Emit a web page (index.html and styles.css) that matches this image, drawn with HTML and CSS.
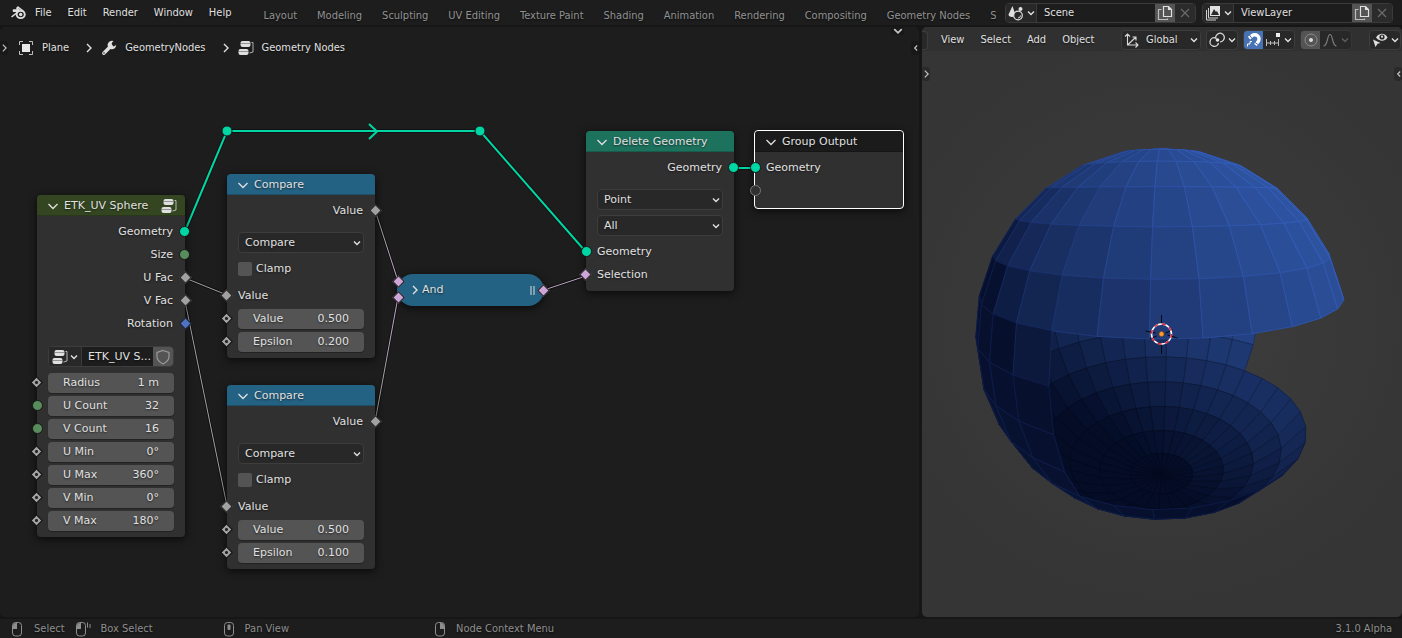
FILE: index.html
```html
<!DOCTYPE html>
<html lang="en">
<head>
<meta charset="utf-8">
<title>Geometry Nodes</title>
<link rel="stylesheet" href="styles.css">
</head>
<body>
<svg class="defs" aria-hidden="true">
  <symbol id="i-down" viewBox="0 0 8 8"><path d="M1 2.500 4 5.500 7 2.500" fill="none" stroke="currentColor" stroke-width="1.4"/></symbol>
  <symbol id="i-fold" viewBox="0 0 12 12"><path d="M1.5 4 6 8.500 10.500 4" fill="none" stroke="currentColor" stroke-width="1.3"/></symbol>
  <symbol id="i-right" viewBox="0 0 8 12"><path d="M2 2 6 6 2 10" fill="none" stroke="currentColor" stroke-width="1.4"/></symbol>
  <symbol id="i-left" viewBox="0 0 8 12"><path d="M6 3 3 6 6 9" fill="none" stroke="currentColor" stroke-width="1.4"/></symbol>
  <symbol id="i-tree" viewBox="0 0 16 16"><rect x="2.500" y="1" width="10" height="6" rx="2" fill="currentColor"/><rect x="0.500" y="9" width="10" height="6" rx="2" fill="currentColor"/><path d="M2.500 3.500H12.500M.5 11.500H10.500" stroke="#333" stroke-width=".8" opacity=".55"/><path d="M13.500 2.500h1.500v9.500l-3.500 1" fill="none" stroke="currentColor" opacity=".75"/></symbol>
  <symbol id="i-copy" viewBox="0 0 16 16"><path d="M6.500 1.500h5l3 3v7h-8zM11.500 1.500v3h3" fill="none" stroke="currentColor" stroke-width="1.200"/><path d="M4.500 4.500h-3v10h9v-1" fill="none" stroke="currentColor" stroke-width="1.200" opacity=".75"/></symbol>
  <symbol id="i-close" viewBox="0 0 16 16"><path d="m4 4 8 8M12 4l-8 8" stroke="#6a6a6a" stroke-width="1.200"/></symbol>
  <symbol id="i-mouse" viewBox="0 0 16 16"><rect x="3.500" y="1.500" width="9" height="13.500" rx="3" fill="none" stroke="currentColor"/></symbol>
</svg>

<div class="app">
  <header class="topbar">
    <nav class="menus">
      <svg class="logo" viewBox="0 0 16 16"><path d="M1 12 8.500 6.200H3V4.900h5.500L6.300 3.200 7.500 2l5.500 4.300" fill="none" stroke="#e0e0e0" stroke-width="1.500" stroke-linejoin="round"/><ellipse cx="10.200" cy="9.500" rx="5" ry="4.500" fill="#e0e0e0"/><ellipse cx="10.200" cy="9.500" rx="3.100" ry="2.800" fill="#1d1d1d"/><circle cx="10.200" cy="9.500" r="1.700" fill="#e0e0e0"/></svg>
      <button>File</button><button>Edit</button><button>Render</button><button>Window</button><button>Help</button>
    </nav>
    <nav class="tabs">
      <button>Layout</button><button>Modeling</button><button>Sculpting</button><button>UV Editing</button><button>Texture Paint</button><button>Shading</button><button>Animation</button><button>Rendering</button><button>Compositing</button><button>Geometry Nodes</button><button>Scripting</button>
    </nav>
    <div class="idbox">
      <button class="idpick" aria-label="Browse scene"><svg class="ic" viewBox="0 0 16 16"><path d="M4.500 1 7 8.500c0 2-1 3.500-3 3.500S.500 11 .500 9.500z" fill="#e0e0e0"/><circle cx="12.500" cy="4" r="2" fill="#e0e0e0"/><circle cx="10" cy="10.500" r="4.300" fill="#282828" stroke="#e0e0e0" stroke-width="1.200"/><path d="M10 13a2.500 2.500 0 0 0 2.500-2.500" fill="none" stroke="#e0e0e0"/></svg><svg class="dn"><use href="#i-down"/></svg></button>
      <input aria-label="Scene" value="Scene">
      <button class="dup" aria-label="New scene"><svg class="ic"><use href="#i-copy"/></svg></button>
      <button class="del" aria-label="Delete scene"><svg class="ic"><use href="#i-close"/></svg></button>
    </div>
    <div class="idbox">
      <button class="idpick" aria-label="Browse view layer"><svg class="ic" viewBox="0 0 16 16"><rect x="5" y="1" width="10" height="10" fill="#e0e0e0"/><path d="m6 10 3-6 2 3 1-1 2 4z" fill="#282828"/><path d="M3.500 3v10h9.500M1.500 5v10h9.500" fill="none" stroke="#cfcfcf"/></svg><svg class="dn"><use href="#i-down"/></svg></button>
      <input aria-label="View layer" value="ViewLayer">
      <button class="dup" aria-label="New view layer"><svg class="ic"><use href="#i-copy"/></svg></button>
      <button class="del" aria-label="Delete view layer"><svg class="ic"><use href="#i-close"/></svg></button>
    </div>
  </header>

  <main class="areas">
    <section class="editor">
      <span class="handle h-left"><svg><use href="#i-right"/></svg></span>
      <span class="handle h-right"><svg><use href="#i-left"/></svg></span>
      <span class="handle h-top"><svg><use href="#i-down"/></svg></span>
      <nav class="crumbs">
        <svg class="ic" viewBox="0 0 16 16"><rect x="4" y="4" width="8" height="8" fill="#e8e8e8"/><path d="M1.500 5V1.500H5M11 1.500h3.500V5M14.500 11v3.500H11M5 14.500H1.500V11" fill="none" stroke="#bdbdbd"/></svg>
        <a href="#">Plane</a>
        <svg class="sep"><use href="#i-right"/></svg>
        <svg class="ic" viewBox="0 0 16 16"><path d="M2.800 13.300 10 6" stroke="#e0e0e0" stroke-width="3.400" stroke-linecap="round"/><path d="M12.500 1A4.300 4.300 0 1 0 15.200 5l-2.500 1.500-2-1.200.2-2.600z" fill="#e0e0e0"/><circle cx="3" cy="13" r=".8" fill="#1d1d1d"/></svg>
        <a href="#">GeometryNodes</a>
        <svg class="sep"><use href="#i-right"/></svg>
        <svg class="ic"><use href="#i-tree"/></svg>
        <a href="#">Geometry Nodes</a>
      </nav>

      <svg class="links" aria-hidden="true">
        <defs>
          <linearGradient id="ga" gradientUnits="userSpaceOnUse" x1="375" y1="210" x2="398" y2="281"><stop offset=".3" stop-color="#a1a1a1"/><stop offset="1" stop-color="#cca6d6"/></linearGradient>
          <linearGradient id="gb" gradientUnits="userSpaceOnUse" x1="375" y1="422" x2="398" y2="297"><stop offset=".3" stop-color="#a1a1a1"/><stop offset="1" stop-color="#cca6d6"/></linearGradient>
        </defs>
        <g transform="translate(0 -27)" fill="none">
          <path class="shade" d="M185 231 227 131H480L586 252M734 168h21"/>
          <path stroke="#00d6a3" stroke-width="2" d="M185 231 227 131H480L586 252M734 168h21M369 124l8 7.500-8 7.500"/>
          <path class="shade thin" d="M185 278 227 295M185 301 227 506M375 210 398 281M375 422 398 297M544 290 586 276"/>
          <path stroke="#a1a1a1" d="M185 278 227 295M185 301 227 506"/>
          <path stroke="url(#ga)" d="M375 210 398 281"/>
          <path stroke="url(#gb)" d="M375 422 398 297"/>
          <path stroke="#b9a0c0" d="M544 290 586 276"/>
          <circle cx="227" cy="131" r="5" fill="#00d6a3" stroke="#1a1a1a"/>
          <circle cx="480" cy="131" r="5" fill="#00d6a3" stroke="#1a1a1a"/>
        </g>
      </svg>

      <article class="node n-sphere">
        <header class="head group"><svg class="fold"><use href="#i-fold"/></svg><span>ETK_UV Sphere</span><svg class="ic end"><use href="#i-tree"/></svg></header>
        <div class="row out">Geometry<i class="sock dot geo"></i></div>
        <div class="row out">Size<i class="sock dot int"></i></div>
        <div class="row out">U Fac<i class="sock dia"></i></div>
        <div class="row out">V Fac<i class="sock dia"></i></div>
        <div class="row out">Rotation<i class="sock dia vec"></i></div>
        <div class="idrow">
          <button class="idpick" aria-label="Browse node group"><svg class="ic"><use href="#i-tree"/></svg><svg class="dn"><use href="#i-down"/></svg></button>
          <input aria-label="Node group" value="ETK_UV S...">
          <button class="dup" aria-label="Fake user"><svg class="ic" viewBox="0 0 16 16"><path d="M8 1.500 14 3.500v4c0 3.500-3 6-6 7.500-3-1.500-6-4-6-7.500v-4z" fill="none" stroke="#9a9a9a" stroke-width="1.200"/></svg></button>
        </div>
        <div class="row"><i class="sock dia hole"></i><label class="field"><span>Radius</span><input value="1 m"></label></div>
        <div class="row"><i class="sock dot int"></i><label class="field"><span>U Count</span><input value="32"></label></div>
        <div class="row"><i class="sock dot int"></i><label class="field"><span>V Count</span><input value="16"></label></div>
        <div class="row"><i class="sock dia hole"></i><label class="field"><span>U Min</span><input value="0°"></label></div>
        <div class="row"><i class="sock dia hole"></i><label class="field"><span>U Max</span><input value="360°"></label></div>
        <div class="row"><i class="sock dia hole"></i><label class="field"><span>V Min</span><input value="0°"></label></div>
        <div class="row"><i class="sock dia hole"></i><label class="field"><span>V Max</span><input value="180°"></label></div>
      </article>

      <article class="node n-cmp1">
        <header class="head math"><svg class="fold"><use href="#i-fold"/></svg><span>Compare</span></header>
        <div class="row out">Value<i class="sock dia"></i></div>
        <div class="picks"><select aria-label="Operation"><option>Compare</option></select></div>
        <div class="row check"><label><input type="checkbox">Clamp</label></div>
        <div class="row">Value<i class="sock dia"></i></div>
        <div class="row"><i class="sock dia hole"></i><label class="field"><span>Value</span><input value="0.500"></label></div>
        <div class="row"><i class="sock dia hole"></i><label class="field"><span>Epsilon</span><input value="0.200"></label></div>
      </article>

      <article class="node n-cmp2">
        <header class="head math"><svg class="fold"><use href="#i-fold"/></svg><span>Compare</span></header>
        <div class="row out">Value<i class="sock dia"></i></div>
        <div class="picks"><select aria-label="Operation"><option>Compare</option></select></div>
        <div class="row check"><label><input type="checkbox">Clamp</label></div>
        <div class="row">Value<i class="sock dia"></i></div>
        <div class="row"><i class="sock dia hole"></i><label class="field"><span>Value</span><input value="0.500"></label></div>
        <div class="row"><i class="sock dia hole"></i><label class="field"><span>Epsilon</span><input value="0.100"></label></div>
      </article>

      <article class="node n-and">
        <svg class="unfold"><use href="#i-right"/></svg><span>And</span><i class="grip"></i>
        <i class="sock dia bool s1"></i><i class="sock dia bool s2"></i><i class="sock dia bool s3"></i>
      </article>

      <article class="node n-del">
        <header class="head geom"><svg class="fold"><use href="#i-fold"/></svg><span>Delete Geometry</span></header>
        <div class="row out">Geometry<i class="sock dot geo"></i></div>
        <div class="picks"><select aria-label="Domain"><option>Point</option></select><select aria-label="Mode"><option>All</option></select></div>
        <div class="row">Geometry<i class="sock dot geo"></i></div>
        <div class="row">Selection<i class="sock dia bool"></i></div>
      </article>

      <article class="node n-out">
        <header class="head io"><svg class="fold"><use href="#i-fold"/></svg><span>Group Output</span></header>
        <div class="row">Geometry<i class="sock dot geo"></i></div>
        <div class="row"><i class="sock dot empty"></i></div>
      </article>
    </section>

    <section class="viewport">
      <header class="vhead">
        <span class="stub"></span>
        <nav class="vmenus"><button>View</button><button>Select</button><button>Add</button><button>Object</button></nav>
        <div class="tool orient">
          <svg class="ic" viewBox="0 0 16 16"><path d="M3.500 2v11H14M1 4.500 3.500 2 6 4.500M11.500 10.500 14 13l-2.500 2.500M3.500 13 12 5M8.500 5H12v3.500" fill="none" stroke="#d8d8d8" stroke-width="1.100"/></svg>
          <select aria-label="Transform orientation"><option>Global</option></select>
        </div>
        <button class="tool two" aria-label="Pivot point"><svg class="ic" viewBox="0 0 16 16"><path d="M6 5.800A4.300 4.300 0 1 0 9.500 11M7 7A4.300 4.300 0 1 1 11 9.800" fill="none" stroke="#d8d8d8" stroke-width="1.300"/><circle cx="8.500" cy="8" r="1.800" fill="#e8e8e8"/></svg><svg class="dn"><use href="#i-down"/></svg></button>
        <div class="tool pair">
          <button class="seg on" aria-label="Snap"><svg class="ic" viewBox="0 0 16 16"><path d="M3 6.200 5.500 4.200A4.200 4.200 0 1 1 12 9.800L9.500 13" fill="none" stroke="#fff" stroke-width="3.400"/><path d="M3.500 3 6 6.500M8.500 10l4 3" stroke="#4772b3" stroke-width="1"/><path d="M1.500 14.500v-2.500h2.500v-2.500h2" fill="none" stroke="#fff"/></svg></button>
          <button class="seg wide" aria-label="Snap to"><svg class="ic" viewBox="0 0 16 16"><rect x="11" y="1" width="4" height="4" fill="#eee"/><path d="M1.500 7v7M5.500 9v4M9.500 9v4M13.500 7v7M1 11h13" stroke="#bdbdbd" fill="none"/></svg><svg class="dn"><use href="#i-down"/></svg></button>
        </div>
        <div class="tool pair dim">
          <button class="seg gray" aria-label="Proportional editing"><svg class="ic" viewBox="0 0 16 16"><circle cx="8" cy="8" r="6" fill="none" stroke="#8c8c8c"/><circle cx="8" cy="8" r="2" fill="#ddd"/></svg></button>
          <button class="seg wide" aria-label="Falloff"><svg class="ic" viewBox="0 0 16 16"><path d="M1.500 14C6 14 5 2.500 8 2.500S10 14 14.500 14" fill="none" stroke="#7d7d7d" stroke-width="1.200"/></svg><svg class="dn faint"><use href="#i-down"/></svg></button>
        </div>
        <button class="tool two vis" aria-label="Visibility"><svg class="ic" viewBox="0 0 16 16"><path d="M4 5.500C7 .5 13 .5 15.500 5.500 13 9.500 8 10 4.500 6z" fill="#e0e0e0"/><circle cx="10" cy="5" r="2.600" fill="#282828"/><circle cx="10" cy="4.700" r="1.100" fill="#e0e0e0"/><path d="M1 7.500 8.500 11l-3 .7L3.500 15z" fill="#e0e0e0"/></svg><svg class="dn"><use href="#i-down"/></svg></button>
      </header>
      <span class="handle v-left"><svg><use href="#i-right"/></svg></span>
      <span class="handle v-right"><svg><use href="#i-left"/></svg></span>
      <svg class="scene" viewBox="-239 -283 479 566">
        <g id="mesh"></g>
        <g fill="none">
          <path stroke="#05070f" d="M0-19V-10M0 10V20M-16-3l10 2M6 1l10 3M-12 5l7-3M4-1l7-3"/>
          <circle r="10" stroke="#fff" stroke-width="1.500"/>
          <circle r="10" stroke="#e0233c" stroke-width="1.500" stroke-dasharray="3.930 3.930"/>
          <circle r="2.500" fill="#ff9a2e" stroke="#7a4310" stroke-width=".6"/>
        </g>
      </svg>
    </section>
  </main>

  <footer class="status">
    <span class="hint"><svg class="ic"><use href="#i-mouse"/><path d="M4 8V4.500Q4 2 7 2h1v6z" fill="currentColor"/></svg>Select</span>
    <span class="hint"><svg class="ic"><use href="#i-mouse" x="-3"/><path d="M1 8V4.500Q1 2 4 2h1v6z" fill="currentColor"/><path d="M11.500 1.500v5M14 3v4" stroke="currentColor"/></svg>Box Select</span>
    <span class="hint pan"><svg class="ic"><use href="#i-mouse"/><rect x="6.500" y="3.500" width="3" height="5.500" rx="1" fill="currentColor"/></svg>Pan View</span>
    <span class="hint ctx"><svg class="ic"><use href="#i-mouse"/><path d="M12 8V4.500Q12 2 9 2H8v6z" fill="currentColor"/></svg>Node Context Menu</span>
    <span class="version">3.1.0 Alpha</span>
  </footer>
</div>
<script src="mesh.js"></script>
</body>
</html>
```

FILE: styles.css
```css
* { box-sizing: border-box; }
body {
  margin: 0;
  background: #161616;
  color: #e0e0e0;
  font: 11px/16px "DejaVu Sans Condensed", "DejaVu Sans", sans-serif;
  text-shadow: 0 1px 2px rgba(0, 0, 0, .6);
}
button, input, select { font: inherit; color: inherit; text-shadow: inherit; margin: 0; padding: 0; border: 0; background: none; }
button { white-space: nowrap; }
a { color: inherit; text-decoration: none; }
svg { display: block; flex: none; }
.defs { position: absolute; width: 0; height: 0; }
.ic { width: 16px; height: 16px; }
.dn { width: 8px; height: 8px; }

.app { display: flex; flex-direction: column; height: 100vh; }

.topbar { display: flex; align-items: center; height: 25px; padding-right: 9px; background: #1d1d1d; }
.menus { display: flex; align-items: center; gap: 16px; padding: 1px 0 0 10px; }
.logo { width: 17px; height: 16px; margin-right: -8px; }
.tabs { display: flex; flex: 1; min-width: 0; gap: 20px; margin: 7px 9px 0 32px; overflow: hidden; color: #929292; }
.idbox { display: flex; height: 20px; border: 1px solid #3a3a3a; border-radius: 4px; overflow: hidden; background: #1d1d1d; flex: 0 0 191px; margin-left: 6px; }
.tabs + .idbox { margin-left: 0; }
.idpick { display: flex; align-items: center; justify-content: center; gap: 3px; width: 31px; background: #282828; border-right: 1px solid #3a3a3a; }
.idbox input { flex: 1; min-width: 0; padding-left: 7px; }
.dup { display: flex; align-items: center; justify-content: center; width: 20px; background: #545454; }
.del { display: flex; align-items: center; justify-content: center; width: 20px; background: #2b2b2b; }

.areas { display: flex; flex: 1; min-height: 0; gap: 3px; padding-top: 2px; }
.editor { position: relative; flex: 919 1 0; min-width: 0; background: #1d1d1d; border-radius: 5px; overflow: hidden; }
.viewport { position: relative; flex: 480 1 0; min-width: 0; display: flex; flex-direction: column; border-radius: 5px; overflow: hidden; background: radial-gradient(circle at 50% 50%, #3e3e3e, #353535 75%); }

.handle { position: absolute; display: flex; align-items: center; justify-content: center; width: 8px; height: 14px; background: #181818; border-radius: 3px; color: #c4c4c4; }
.handle svg { width: 7px; height: 10px; }
.h-left { left: 0; top: 14px; }
.h-right { right: 0; top: 14px; }
.h-top { right: 15px; top: 0; width: 13px; height: 8px; }
.h-top svg { width: 10px; height: 10px; }
.v-left { left: 0; top: 40px; background: #2a2a2a; }
.v-right { right: 0; top: 40px; background: #2a2a2a; }

.crumbs { display: flex; align-items: center; padding: 13px 0 0 18px; }
.crumbs a { margin-left: 8px; }
.crumbs .sep { width: 8px; height: 12px; margin: 0 8px 0 16px; }

.links { position: absolute; inset: 0; width: 100%; height: 100%; }
.shade { stroke: #111; stroke-width: 4; }
.shade.thin { stroke-width: 3; }

.node { position: absolute; width: 148px; padding-bottom: 5px; background: #303030; border-radius: 4px; box-shadow: 0 2px 9px rgba(0, 0, 0, .7); font-family: "DejaVu Sans", sans-serif; }
.n-sphere { left: 37px; top: 168px; }
.n-cmp1 { left: 227px; top: 147px; }
.n-cmp2 { left: 227px; top: 358px; }
.n-del { left: 586px; top: 104px; }
.n-out { left: 754px; top: 103px; width: 150px; height: 79px; border: 1px solid #fff; }
.head { display: flex; align-items: center; height: 21px; margin-bottom: 4px; padding: 0 8px 0 10px; border-radius: 4px 4px 0 0; box-shadow: inset 0 -1px rgba(0, 0, 0, .2); }
.fold { width: 12px; height: 12px; margin-right: 5px; }
.head .end { margin-left: auto; }
.group { background: #344621; }
.math { background: #246283; }
.geom { background: #1d725e; }
.io { background: #1b1b1b; }

.row { position: relative; display: flex; align-items: center; height: 23px; padding: 0 11px; }
.out { justify-content: flex-end; padding-right: 12px; }
.sock { position: absolute; left: -5px; top: 6px; width: 11px; height: 11px; border: 1px solid #161616; background: #a1a1a1; }
.out .sock { left: auto; right: -5px; }
.dot { border-radius: 50%; }
.dia { transform: rotate(45deg); top: 7px; width: 9px; height: 9px; }
.hole { background: radial-gradient(circle, #222 1px, #a1a1a1 2px); }
.geo { background: #00d6a3; }
.int { background: #598c5c; }
.vec { background: #4d73c2; }
.bool { background: #cca6d6; }
.empty { background: #303030; border-color: #777; }

.field { display: flex; flex: 1; align-items: center; min-width: 0; height: 20px; padding: 0 15px; background: #545454; border-radius: 4px; box-shadow: 0 1px 1px rgba(0, 0, 0, .3); }
.field input { flex: 1; min-width: 0; width: 0; text-align: right; }
.idrow { display: flex; height: 21px; margin: 11px 11px 4px; border: 1px solid #3d3d3d; border-radius: 4px; overflow: hidden; background: #1d1d1d; }
.idrow .idpick { width: 33px; gap: 2px; }
.idrow input { flex: 1; min-width: 0; padding-left: 6px; }

select { appearance: none; background: #282828 url("data:image/svg+xml,%3Csvg xmlns='http://www.w3.org/2000/svg' width='8' height='8'%3E%3Cpath d='M1 2.500 4 5.500 7 2.500' fill='none' stroke='%23e0e0e0' stroke-width='1.400'/%3E%3C/svg%3E") no-repeat right 2px center; }
.picks { display: grid; gap: 5px; padding: 10px 11px 4px; }
.picks select { height: 21px; padding-left: 6px; border: 1px solid #3d3d3d; border-radius: 4px; }
.check label { display: flex; align-items: center; gap: 4px; }
.check input { appearance: none; width: 14px; height: 14px; border-radius: 2px; background: #545454; }
.check { margin-bottom: 4px; }

.n-and { display: flex; align-items: center; left: 397px; top: 247px; width: 147px; height: 32px; padding: 0 9px 0 14px; border-radius: 16px; background: #246283; }
.n-and .unfold { width: 8px; height: 12px; margin-right: 3px; }
.grip { width: 5px; height: 9px; margin-left: auto; border: solid #7fa0b2; border-width: 0 2px; }
.n-and .s1 { left: -3px; top: 3px; }
.n-and .s2 { left: -3px; top: 19px; }
.n-and .s3 { left: 142px; top: 12px; }

.vhead { display: flex; align-items: center; height: 24px; padding-top: 2px; background: #303030; }
.stub { width: 6px; height: 19px; margin-right: 13px; border: 1px solid #3d3d3d; border-left: 0; border-radius: 0 4px 4px 0; background: #282828; }
.vmenus { display: flex; gap: 16px; margin-right: auto; }
.tool { display: flex; align-items: center; height: 20px; margin-left: 5px; border: 1px solid #3d3d3d; border-radius: 4px; background: #282828; overflow: hidden; }
.orient { width: 80px; padding-left: 2px; }
.orient select { flex: 1; height: 18px; padding-left: 6px; }
.two { justify-content: center; gap: 3px; width: 32px; }
.pair { width: 52px; }
.seg { display: flex; align-items: center; justify-content: center; gap: 3px; width: 19px; height: 18px; }
.seg.wide { width: 31px; }
.on { background: #4772b3; }
.gray { background: #545454; }
.dim { border-color: #363636; }
.faint { color: #5e5e5e; }
.vis { margin-left: 17px; margin-right: 1px; }
.scene { flex: 1; min-height: 0; width: 100%; }

.status { display: flex; align-items: center; height: 19px; margin-top: 2px; padding: 0 10px 0 9px; background: #1d1d1d; color: #8e8e8e; }
.hint { display: flex; align-items: center; gap: 9px; margin-right: 11px; }
.pan { margin-left: 57px; }
.pan, .ctx { gap: 8px; }
.ctx { margin-left: 132px; }
.version { margin-left: auto; }
```

FILE: mesh.js
```js
// Perspective view of a flat-shaded UV sphere with a section deleted.
(function () {
  var SEG = 32, RINGS = 15;
  var DIST = 2.4, FOCAL = 406, TILT = 19 * Math.PI / 180;
  var START = -25;            // azimuth of the first open edge, degrees
  var OPEN = 14;              // deleted segments
  var DARK = [4, 12, 38], LIGHT = [50, 90, 172];

  function point(lat, az) {
    lat *= Math.PI / 180;
    az *= Math.PI / 180;
    var x = Math.cos(lat) * Math.sin(az);
    var f = Math.cos(lat) * Math.cos(az);
    var h = Math.sin(lat);
    return [x, h * Math.cos(TILT) - f * Math.sin(TILT), f * Math.cos(TILT) + h * Math.sin(TILT)];
  }
  function project(p) {
    var s = FOCAL / (DIST - p[2]);
    return (p[0] * s).toFixed(1) + "," + (-p[1] * s).toFixed(1);
  }
  function mix(t) {
    return DARK.map(function (c, i) { return c + (LIGHT[i] - c) * t; });
  }
  function css(c, k, add) {
    return "rgb(" + c.map(function (v, i) { return Math.round(v * k + add[i]); }).join(",") + ")";
  }

  var back = [], front = [];
  for (var r = 0; r < RINGS; r++) {
    var top = 90 - r * 12, bottom = top - 12;
    for (var s = 0; s < SEG; s++) {
      if (s < OPEN && top <= 18 && bottom >= -30) continue;
      var a = START + s * 11.25, b = a + 11.25;
      var n = point((top + bottom) / 2, (a + b) / 2);
      var outside = n[2] * DIST > 0.99;
      var t, c, line;
      if (outside) {
        t = Math.max(0, 0.58 * n[0] + 0.62 * n[1] + 0.47 * n[2]);
        t = Math.pow(Math.min(1, t), 0.75) * 0.94 + 0.07 * Math.max(0, -n[0] - n[1]);
        c = mix(Math.min(1, t));
        line = css(c, 1, [7, 11, 26]);
      } else {
        t = Math.max(0, 0.5 + 0.26 * n[0] + 0.54 * n[1]);
        c = mix(t);
        line = css(c, 0.78, [0, 0, 0]);
      }
      var pts = [point(top, a), point(top, b), point(bottom, b), point(bottom, a)].map(project).join(" ");
      (outside ? front : back).push([pts, css(c, 1, [0, 0, 0]), line]);
    }
  }
  var mesh = document.getElementById("mesh");
  back.concat(front).forEach(function (f) {
    var el = document.createElementNS("http://www.w3.org/2000/svg", "polygon");
    el.setAttribute("points", f[0]);
    el.setAttribute("fill", f[1]);
    el.setAttribute("stroke", f[2]);
    el.setAttribute("stroke-linejoin", "round");
    mesh.appendChild(el);
  });
})();
```
